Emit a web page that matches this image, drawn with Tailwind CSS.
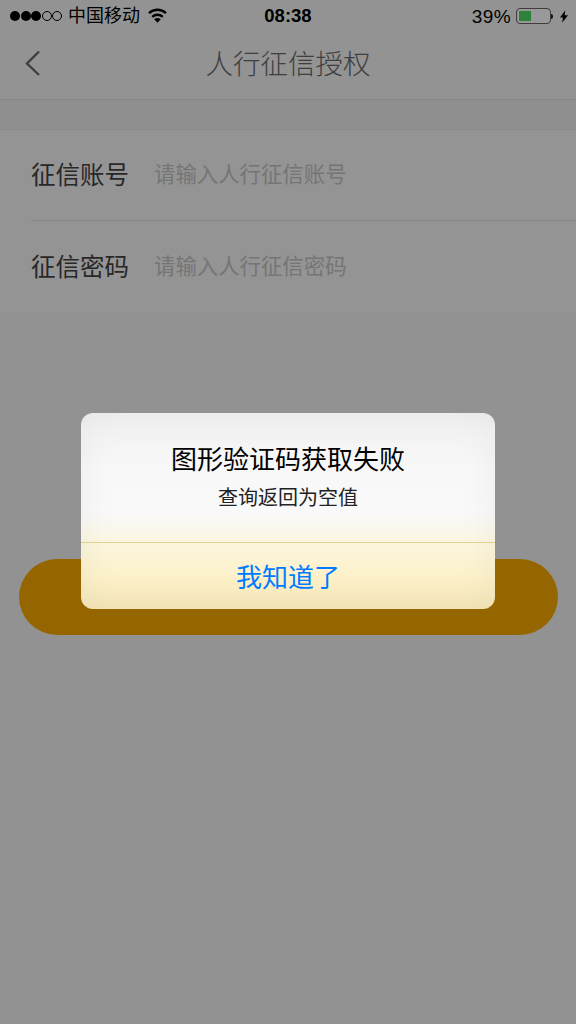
<!DOCTYPE html>
<html lang="zh-CN">
<head>
  <meta charset="UTF-8" />
  <meta name="viewport" content="width=device-width, initial-scale=1.0" />
  <title>人行征信授权</title>
  <script src="https://cdn.jsdelivr.net/npm/@tailwindcss/browser@4"></script>
</head>
<body class="bg-[#f3f3f3] font-['Liberation_Sans','Noto_Sans_CJK_SC',sans-serif]">

  <div class="relative w-[576px] h-[1024px] overflow-hidden bg-[#f3f3f3]">

    <!-- nav -->
    <div class="bg-[#f6f6f6] h-[100px] border-b border-[#e2e2e2]">
      <div class="h-[32px] flex items-center text-black">
        <div class="flex items-center gap-[0.5px] ml-[10px]">
          <span class="w-[10px] h-[10px] rounded-full bg-black"></span>
          <span class="w-[10px] h-[10px] rounded-full bg-black"></span>
          <span class="w-[10px] h-[10px] rounded-full bg-black"></span>
          <span class="w-[10px] h-[10px] rounded-full border border-black"></span>
          <span class="w-[10px] h-[10px] rounded-full border border-black"></span>
        </div>
        <span class="ml-[6px] text-[18px] leading-none">中国移动</span>
        <svg class="ml-[8px] -mt-[2px]" width="19" height="15" viewBox="0 0 19 15" fill="none" stroke="#000" stroke-width="2.4">
          <path d="M1 5.2C6 .6 13 .6 18 5.2" />
          <path d="M4.2 8.8c3-2.7 7.6-2.7 10.6 0" />
          <path d="M9.5 14.8 6.2 11.2c2-1.6 4.6-1.6 6.6 0z" fill="#000" stroke="none" />
        </svg>
        <span class="absolute left-0 right-0 text-center text-[18.5px] font-bold leading-none">08:38</span>
        <div class="ml-auto flex items-center">
          <span class="text-[19px] leading-none tracking-[0.4px]">39%</span>
          <div class="ml-[5px] w-[35px] h-[16px] rounded-[4px] border border-[#666] bg-white p-[2px]">
            <div class="w-[12px] h-full bg-[#4cd964]"></div>
          </div>
          <div class="w-[2px] h-[5px] bg-[#222] rounded-r-[2px]"></div>
          <svg class="ml-[7px] mr-[8px]" width="8" height="15" viewBox="0 0 9 14" fill="#000">
            <path d="M6 0 0 8h3.4L2.4 14 9 5.6H5.2z" />
          </svg>
        </div>
      </div>
      <div class="relative h-[60px] flex items-center justify-center mt-[1px] pt-[4px]">
        <svg class="absolute left-[25px] top-[17px]" width="16" height="26" viewBox="0 0 16 26" fill="none" stroke="#6a6a6a" stroke-width="2.4">
          <path d="M14 1.5 2 13.5 14 25" />
        </svg>
        <span class="text-[27.5px] text-[#6a6a6a] font-light leading-none">人行征信授权</span>
      </div>
    </div>

    <!-- band under the nav -->
    <div class="h-[29px] bg-[#eeeeee]"></div>

    <!-- form -->
    <div class="bg-[#f7f7f7] border-t border-[#e6e6e6]">
      <div class="h-[91px] ml-[31px] pt-[2px] flex items-center border-b border-[#dedede]">
        <span class="w-[123px] text-[24.5px] text-[#444] leading-none">征信账号</span>
        <span class="text-[21.4px] text-[#c4c4c4] leading-none">请输入人行征信账号</span>
      </div>
      <div class="h-[91px] ml-[31px] pt-[3px] flex items-center">
        <span class="w-[123px] text-[24.5px] text-[#444] leading-none">征信密码</span>
        <span class="text-[21.4px] text-[#c4c4c4] leading-none">请输入人行征信密码</span>
      </div>
    </div>

    <div class="mt-[247px] mx-[18.5px] h-[76px] rounded-full bg-[#f8a900]"></div>

    <!-- dim + alert -->
    <div class="absolute inset-0 bg-black/40"></div>
    <div class="absolute left-[81px] top-[413px] w-[414px] h-[196px] rounded-[12px] overflow-hidden flex flex-col text-center shadow-[inset_0_0_36px_rgba(120,120,120,0.09)] bg-[linear-gradient(180deg,#f1f1f2_0%,#f8f8f9_28%,#f9f9f9_50%,#fbf7e8_62%,#fbf5dc_68%,#fdf1c9_84%,#f6e7b7_100%)]">
      <div class="h-[130px] border-b border-[#e3d08e]">
        <div class="mt-[34px] text-[26px] leading-none text-black">图形验证码获取失败</div>
        <div class="mt-[15px] text-[20px] leading-none text-[#222]">查询返回为空值</div>
      </div>
      <div class="flex-1 flex items-center justify-center pt-[3px] text-[26px] leading-none text-[#007aff]">我知道了</div>
    </div>
  </div>

</body>
</html>
